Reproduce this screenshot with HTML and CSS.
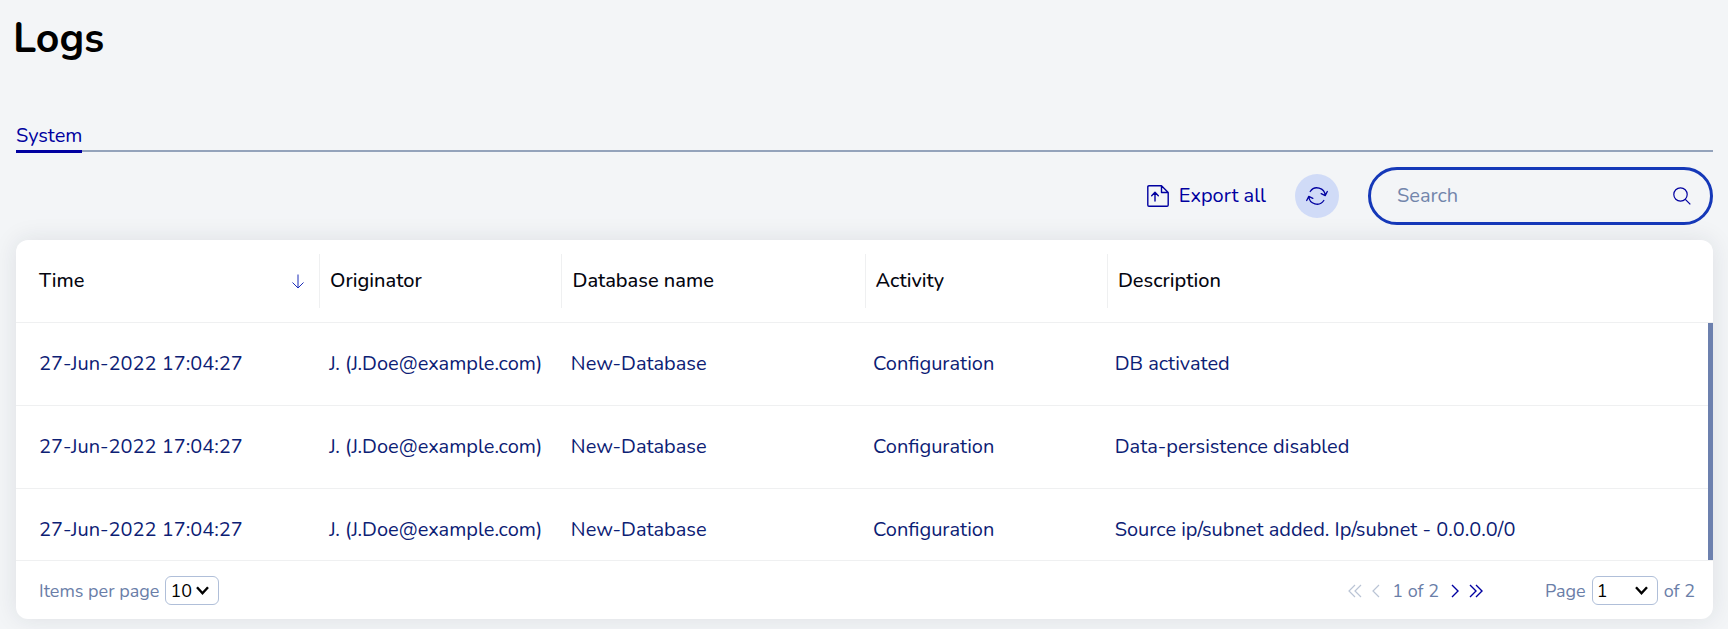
FILE: index.html
```html
<!DOCTYPE html>
<html lang="en">
<head>
<meta charset="utf-8">
<meta name="viewport" content="width=device-width, initial-scale=1">
<title>Logs</title>
<link rel="stylesheet" href="styles.css">
</head>
<body>
<h1 class="title">Logs</h1>
<main class="page">
  <nav class="tabs"><a class="tab" href="#system" aria-current="page">System</a></nav>
  <div class="toolbar">
    <button class="export" type="button">
      <svg width="22" height="22" viewBox="0 0 22 22" fill="none" stroke="currentColor" stroke-width="1.4" stroke-linejoin="round" stroke-linecap="round" aria-hidden="true"><path d="M14.500 .8H2Q.8.800.8 2v18Q.8 21.200 2 21.200h18q1.200 0 1.200-1.200V7.500L14.500.8v6.700h6.700M8 16V7.500M4.700 10.700 8 7.300l3.300 3.400"/></svg>
      <span>Export all</span>
    </button>
    <button class="refresh" type="button" aria-label="Refresh">
      <svg width="22" height="20" viewBox="0 0 22 20" fill="none" stroke="currentColor" stroke-width="1.300" stroke-linejoin="round" stroke-linecap="round" aria-hidden="true"><path d="M4.200 5.500A8.200 8.200 0 0 1 19.200 9.500M15.200 7.600l4 2L21.300 5.500M17.800 14.500A8.200 8.200 0 0 1 2.800 10.500M.7 14.500l2.100-4.100 4 2"/></svg>
    </button>
    <label class="search">
      <input class="search-input" type="text" placeholder="Search" aria-label="Search">
      <svg width="18" height="18" viewBox="0 0 18 18" fill="none" stroke="currentColor" stroke-width="1.200" aria-hidden="true"><circle cx="7.500" cy="7.500" r="6.700"/><path d="m12.300 12.300 5 5"/></svg>
    </label>
  </div>
  <section class="card">
    <table class="logs">
      <thead class="logs-head">
        <tr class="row">
          <th class="head-cell" scope="col"><span>Time</span><svg class="sort" width="12" height="15" viewBox="0 0 12 15" fill="none" stroke="currentColor" stroke-width="1" aria-hidden="true"><path d="M6 .5v13.500M.5 8.500 6 14l5.500-5.500"/></svg></th>
          <th class="head-cell" scope="col">Originator</th>
          <th class="head-cell" scope="col">Database name</th>
          <th class="head-cell" scope="col">Activity</th>
          <th class="head-cell" scope="col">Description</th>
        </tr>
      </thead>
      <tbody class="logs-body">
        <tr class="row"><td class="cell">27-Jun-2022 17:04:27</td><td class="cell">J. (J.Doe@example.com)</td><td class="cell">New-Database</td><td class="cell">Configuration</td><td class="cell">DB activated</td></tr>
        <tr class="row"><td class="cell">27-Jun-2022 17:04:27</td><td class="cell">J. (J.Doe@example.com)</td><td class="cell">New-Database</td><td class="cell">Configuration</td><td class="cell">Data-persistence disabled</td></tr>
        <tr class="row"><td class="cell">27-Jun-2022 17:04:27</td><td class="cell">J. (J.Doe@example.com)</td><td class="cell">New-Database</td><td class="cell">Configuration</td><td class="cell">Source ip/subnet added. Ip/subnet - 0.0.0.0/0</td></tr>
      </tbody>
    </table>
    <footer class="footer">
      <div class="field">
        <label for="size">Items per page</label>
        <span class="picker"><select class="select" id="size"><option>10</option></select><svg class="chevron" width="13" height="9" viewBox="0 0 13 9" fill="none" stroke="currentColor" stroke-width="2.400" aria-hidden="true"><path d="m1 1.200 5.500 6 5.500-6"/></svg></span>
      </div>
      <div class="pager">
        <button class="step" type="button" disabled aria-label="First page"><svg width="14" height="14" viewBox="0 0 14 14" fill="none" stroke="currentColor" stroke-width="1.200"><path d="M7 1 1 7l6 6M13 1 7 7l6 6"/></svg></button>
        <button class="step" type="button" disabled aria-label="Previous page"><svg width="8" height="14" viewBox="0 0 8 14" fill="none" stroke="currentColor" stroke-width="1.200"><path d="M7 1 1 7l6 6"/></svg></button>
        <span class="position">1 of 2</span>
        <button class="step" type="button" aria-label="Next page"><svg width="8" height="14" viewBox="0 0 8 14" fill="none" stroke="currentColor" stroke-width="1.400"><path d="m1 1 6 6-6 6"/></svg></button>
        <button class="step" type="button" aria-label="Last page"><svg width="14" height="14" viewBox="0 0 14 14" fill="none" stroke="currentColor" stroke-width="1.400"><path d="m1 1 6 6-6 6M7 1l6 6-6 6"/></svg></button>
      </div>
      <div class="field">
        <label for="page">Page</label>
        <span class="picker picker-wide"><select class="select" id="page"><option>1</option></select><svg class="chevron" width="13" height="9" viewBox="0 0 13 9" fill="none" stroke="currentColor" stroke-width="2.400" aria-hidden="true"><path d="m1 1.200 5.500 6 5.500-6"/></svg></span>
        <span>of 2</span>
      </div>
    </footer>
  </section>
</main>
</body>
</html>
```
FILE: styles.css
```css
* { box-sizing: border-box; }
body {
  margin: 0;
  background: #f3f5f7;
  color: #04050f;
  font-family: Nunito, Lato, sans-serif;
  font-size: 20px;
  line-height: 24px;
}
button, input, select { font: inherit; color: inherit; }
button { border: 0; padding: 0; background: none; cursor: pointer; }
svg { flex: none; display: block; }
.page { padding: 0 15px 12px 16px; }
.title {
  margin: 0;
  padding: 15px 13px 49px;
  font-size: 41px;
  line-height: 48px;
  font-weight: 700;
  color: #000;
}
.tabs { display: flex; border-bottom: 2px solid #94a3bb; height: 40px; }
.tab {
  height: 41px;
  padding-top: 12px;
  border-bottom: 3px solid #0000a0;
  color: #0000a0;
  text-decoration: none;
}
.toolbar {
  display: flex;
  justify-content: flex-end;
  align-items: center;
  gap: 29px;
  padding: 15px 0;
  color: #0000a0;
}
.export { display: flex; align-items: center; gap: 10px; }
.refresh {
  display: grid;
  place-items: center;
  width: 44px;
  height: 44px;
  border-radius: 50%;
  background: #d0dbf7;
}
.search {
  display: flex;
  align-items: center;
  width: 345px;
  height: 58px;
  padding: 0 19px 0 26px;
  border: 3px solid #1538b8;
  border-radius: 29px;
}
.search-input {
  flex: 1;
  min-width: 0;
  padding: 0;
  border: 0;
  outline: 0;
  background: none;
}
.search-input::placeholder { color: #7285ab; opacity: 1; }
.card {
  overflow: hidden;
  border-radius: 12px;
  background: #fff;
  box-shadow: 0 0 24px rgba(30, 40, 60, .1);
}
.logs { display: block; }
.logs-head { display: block; }
.row {
  display: grid;
  grid-template-columns: 5fr 4fr 5fr 4fr 10fr;
  border-bottom: 1px solid #eff0f1;
}
.logs-head .row { padding: 14px 0; }
.head-cell {
  display: flex;
  align-items: center;
  justify-content: space-between;
  height: 54px;
  padding: 0 15px 0 10px;
  border-left: 1px solid #eff0f1;
  font-weight: 500;
  text-align: left;
}
.head-cell:first-child { padding-left: 23px; border-left: 0; }
.sort { color: #1b2cb8; }
.logs-body {
  display: block;
  max-height: 237px;
  overflow: hidden;
  border-right: 5px solid #6c80ae;
  color: #0c2074;
}
.cell { padding: 29px 0 29px 11px; white-space: nowrap; }
.cell:first-child { padding-left: 23px; }
.footer {
  display: flex;
  align-items: center;
  padding: 15px 18px 14px 23px;
  border-top: 1px solid #eff0f1;
  color: #6a7ea8;
  font-size: 18px;
}
.field { display: flex; align-items: center; gap: 6px; }
.picker { display: grid; align-items: center; width: 54px; color: #000; }
.picker-wide { width: 66px; }
.select {
  grid-area: 1 / 1;
  width: 100%;
  height: 29px;
  padding: 0 4px;
  border: 1px solid #b0bfd9;
  border-radius: 6px;
  background: #fff;
  appearance: none;
}
.chevron { grid-area: 1 / 1; justify-self: end; margin-right: 10px; pointer-events: none; }
.pager { display: flex; align-items: center; gap: 10px; margin-left: auto; margin-right: 62px; }
.position { padding: 0 2px; }
.step { color: #0000a0; }
.step:disabled { color: #bac4d5; }
```
